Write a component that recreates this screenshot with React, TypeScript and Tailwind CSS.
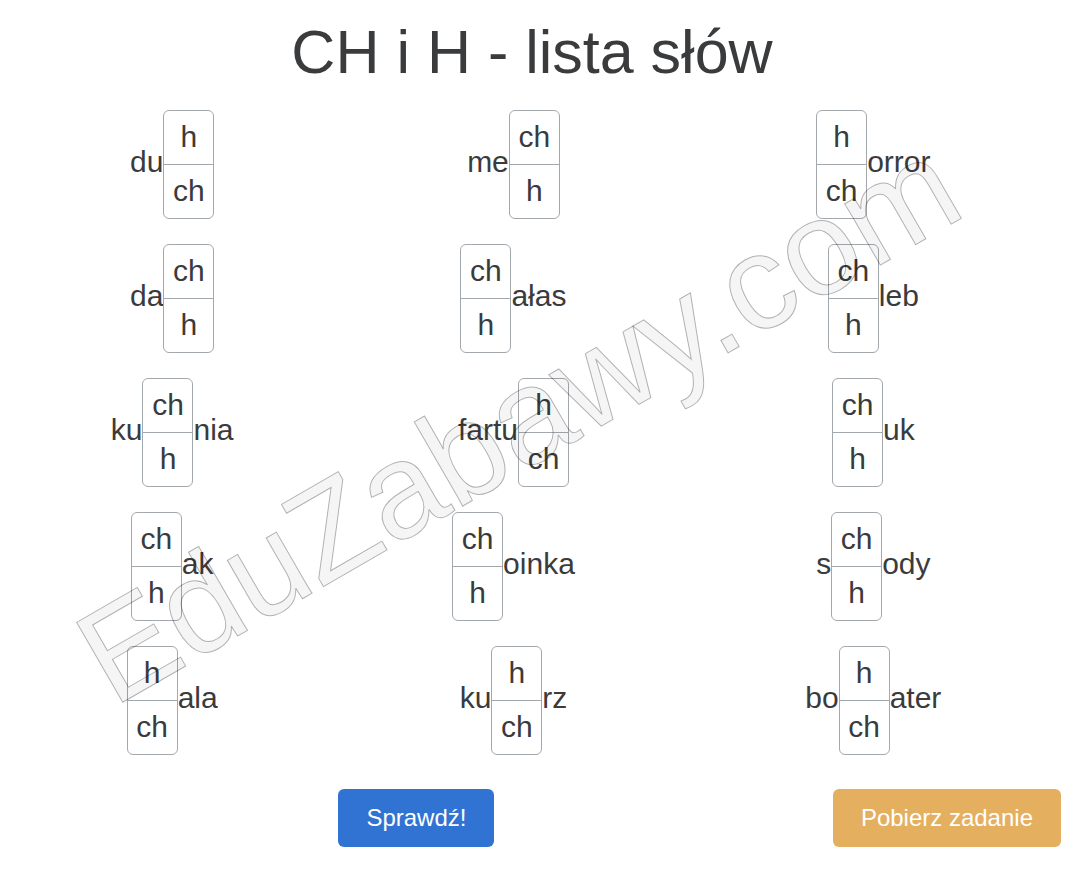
import { useState } from "react";

type Word = { before?: string; options: [string, string]; after?: string };

const H_FIRST: [string, string] = ["h", "ch"];
const CH_FIRST: [string, string] = ["ch", "h"];

const words: Word[] = [
  { before: "du", options: H_FIRST },
  { before: "me", options: CH_FIRST },
  { options: H_FIRST, after: "orror" },
  { before: "da", options: CH_FIRST },
  { options: CH_FIRST, after: "ałas" },
  { options: CH_FIRST, after: "leb" },
  { before: "ku", options: CH_FIRST, after: "nia" },
  { before: "fartu", options: H_FIRST },
  { options: CH_FIRST, after: "uk" },
  { options: CH_FIRST, after: "ak" },
  { options: CH_FIRST, after: "oinka" },
  { before: "s", options: CH_FIRST, after: "ody" },
  { options: H_FIRST, after: "ala" },
  { before: "ku", options: H_FIRST, after: "rz" },
  { before: "bo", options: H_FIRST, after: "ater" },
];

function WordItem({ word }: { word: Word }) {
  const [selected, setSelected] = useState<string | null>(null);

  return (
    <li className="flex h-[134px] items-center justify-center">
      {word.before && <span className="pb-1">{word.before}</span>}
      <div
        role="group"
        aria-label="Wybierz h lub ch"
        className="flex h-[109px] w-[51px] flex-col divide-y divide-[#a3a8ad] overflow-hidden rounded-md border border-[#a3a8ad]"
      >
        {word.options.map((option) => (
          <button
            key={option}
            type="button"
            aria-pressed={selected === option}
            onClick={() => setSelected(option)}
            className="flex-1 cursor-pointer aria-pressed:bg-[#e2e6ea]"
          >
            {option}
          </button>
        ))}
      </div>
      {word.after && <span className="pb-1">{word.after}</span>}
    </li>
  );
}

export default function App() {
  return (
    <main className="relative overflow-hidden bg-white pb-[22px] font-['Liberation_Sans',Arial,sans-serif] text-[30px] leading-9 text-[#3a3b3d]">
      <div className="pr-[26px] pl-2.5">
        <h1 className="pt-[22px] pb-[14px] text-center text-[61px] leading-[61px]">CH i H - lista słów</h1>
        <ul className="grid grid-cols-[324fr_358fr_361fr]">
          {words.map((word, index) => (
            <WordItem key={index} word={word} />
          ))}
        </ul>
      </div>

      <div className="mt-[22px] flex pr-[19px] text-2xl text-white">
        <div className="flex flex-1 justify-center">
          <button type="button" className="h-[58px] cursor-pointer rounded-md bg-[#3073d2] px-7">
            Sprawdź!
          </button>
        </div>
        <button type="button" className="h-[58px] cursor-pointer rounded-md bg-[#e5af60] px-7">
          Pobierz zadanie
        </button>
      </div>

      <div className="pointer-events-none absolute inset-0 flex items-center justify-center pr-[44px] pb-7">
        <span className="-rotate-30 text-[134px] leading-none whitespace-nowrap text-black/4 [-webkit-text-stroke:1px_rgba(0,0,0,0.3)]">
          EduZabawy.com
        </span>
      </div>
    </main>
  );
}
